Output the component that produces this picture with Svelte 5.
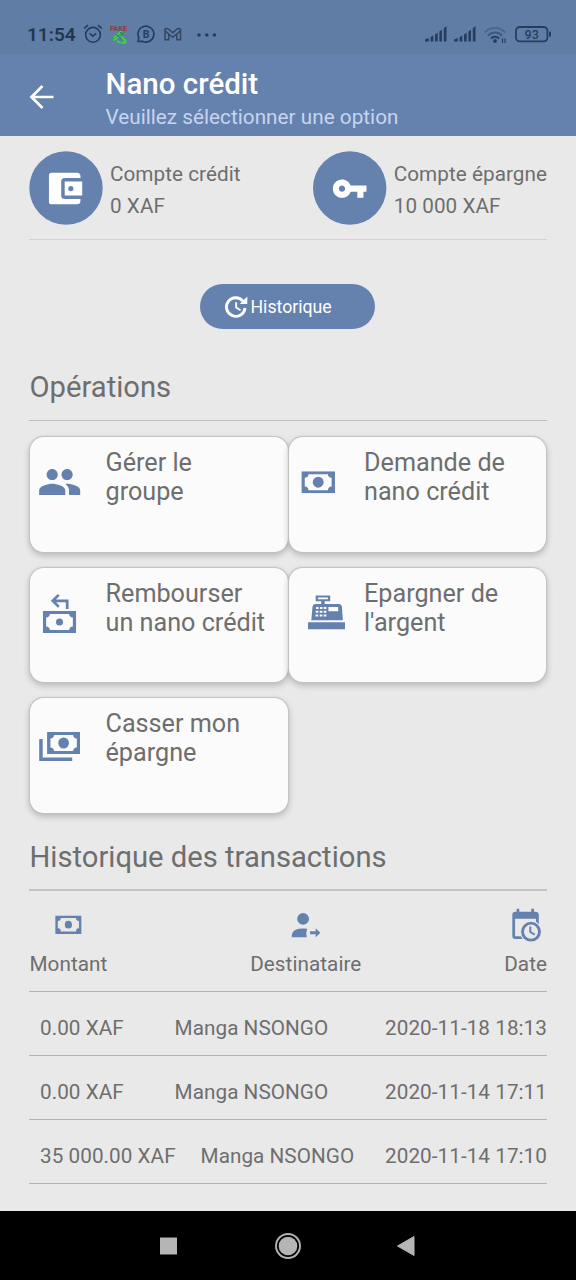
<script>
  const operations = [
    { icon: 'group', lines: ['Gérer le', 'groupe'] },
    { icon: 'cash', lines: ['Demande de', 'nano crédit'] },
    { icon: 'refund', lines: ['Rembourser', 'un nano crédit'] },
    { icon: 'register', lines: ['Epargner de', "l'argent"] },
    { icon: 'notes', lines: ['Casser mon', 'épargne'] }
  ];

  const transactions = [
    { amount: '0.00 XAF', name: 'Manga NSONGO', date: '2020-11-18 18:13' },
    { amount: '0.00 XAF', name: 'Manga NSONGO', date: '2020-11-14 17:11' },
    { amount: '35 000.00 XAF', name: 'Manga NSONGO', date: '2020-11-14 17:10' }
  ];
</script>

{#snippet banknote(x, y, w, h, r)}
  <svg {x} {y} width={w} height={h} viewBox="0 0 34 22" preserveAspectRatio="none">
    <path fill-rule="evenodd" d="M0 0H34V22H0ZM7.2 3A3.6 3.6 0 0 1 3.4 6.6V15.4A3.6 3.6 0 0 1 7.2 19H26.8A3.6 3.6 0 0 1 30.6 15.4V6.6A3.6 3.6 0 0 1 26.8 3Z" />
    <circle cx="17" cy="11" {r} />
  </svg>
{/snippet}

{#snippet signal()}
  <svg width="22" height="16" viewBox="0 0 22 16">
    <path d="M0 15.5V13.6L3.8 12V15.5ZM5.6 15.5V11L8.3 9.6V15.5ZM10 15.5V8.4L12.7 6.8V15.5ZM14.4 15.5V5.4L17 3.7V15.5ZM18.8 15.5V2.2L21.5 0V15.5Z" />
  </svg>
{/snippet}

<div class="screen">
  <div class="status">
    <span class="time">11:54</span>
    <svg class="alarm" width="20" height="20" viewBox="0 0 20 20">
      <g fill="none" stroke="#263d5f" stroke-width="1.6">
        <circle cx="10" cy="10.8" r="7.4" />
        <path d="M1.2 4.3 5 1.2M15 1.2 18.8 4.3M6.6 9.3 9.8 12.2 13.2 9.3" />
      </g>
    </svg>
    <svg class="fake" width="20" height="22" viewBox="0 0 20 22">
      <path d="M17.5 4.500C11 6 3 13 1.500 18.500L9 16C14 11.500 17 8.500 17.500 4.500Z" fill="#2fa35c" />
      <path d="M5 13.500 13 7M4.500 16.500 11 12M12 12.500 16.500 16.500 13 19.500M8 17 12 19M14 18.500H17.500" stroke="#45cc55" stroke-width="1.800" fill="none" />
      <path d="M7 10.500 12 14.500M11 8 14.500 11" stroke="#2c6b6c" fill="none" />
      <text x="1" y="6.5" font-size="7" font-weight="700" fill="#8a3a40" textLength="17" lengthAdjust="spacingAndGlyphs">FAKE</text>
    </svg>
    <svg class="bubble" width="20" height="20" viewBox="0 0 20 20">
      <path d="M2 17.4 2.800 13.8A8 8 0 1 1 6.2 17.200Z" fill="none" stroke="#263d5f" stroke-width="1.6" />
      <text x="6.7" y="13.9" font-size="10.5" font-weight="700" fill="#263d5f">B</text>
    </svg>
    <svg class="mail" width="18" height="15" viewBox="0 0 18 15">
      <path d="M1 12.7V2.2Q3 .8 4.5 2L8.7 5.7 13 2Q15 .8 16.5 2.2V12.7H12.8V7L8.7 10.3 4.7 7V12.7ZM4.7 7 1 3.7M12.8 7 16.5 3.7" fill="none" stroke="#33465f" stroke-width="1.5" />
    </svg>
    <svg class="more" width="20" height="4" viewBox="0 0 20 4"><circle cx="2" cy="2" r="1.8" /><circle cx="9.800" cy="2" r="1.8" /><circle cx="17.4" cy="2" r="1.8" /></svg>
    <div class="spacer"></div>
    <div class="radio">{@render signal()}</div>
    <div class="radio second">{@render signal()}</div>
    <svg class="wifi" width="24" height="18" viewBox="0 0 24 18">
      <g fill="none" stroke-width="2">
        <path d="M.8 6.5A14 14 0 0 1 21.2 6.5" stroke="#4b6789" />
        <path d="M4 9.7A9.5 9.5 0 0 1 18 9.7" stroke="#40597b" />
        <path d="M7 12.6A5.3 5.3 0 0 1 15 12.6" stroke="#263d5f" />
      </g>
      <circle cx="11" cy="15" r="1.9" />
      <path d="M18.5 12.5V17M21 12.5V17" stroke="#263d5f" stroke-width="1.2" />
    </svg>
    <svg class="battery" width="37" height="17" viewBox="0 0 37 17">
      <rect x="1" y="1" width="31.4" height="14.4" rx="3.8" fill="none" stroke="#263d5f" stroke-width="1.8" />
      <rect x="34" y="5.6" width="2" height="5.2" rx=".8" />
      <text x="16.7" y="12.600" text-anchor="middle" font-size="12.5" font-weight="500" fill="#263d5f">93</text>
    </svg>
  </div>

  <header>
    <svg width="26" height="26" viewBox="0 0 26 26">
      <path d="M24.500 13H3M13.500 2 2.500 13 13.500 24" fill="none" stroke="#fff" stroke-width="2.700" />
    </svg>
    <div class="titles">
      <h1>Nano crédit</h1>
      <p>Veuillez sélectionner une option</p>
    </div>
  </header>

  <main>
    <section class="accounts">
      <div class="account">
        <svg width="74" height="74" viewBox="0 0 74 74">
          <circle cx="37" cy="37" r="36.700" />
          <g transform="translate(14.700 16.500) scale(1.75)" fill="#fff">
            <path fill-rule="evenodd" d="M21 18v1a2 2 0 0 1-2 2H4.500A1.500 1.500 0 0 1 3 19.500v-15A1.500 1.500 0 0 1 4.500 3H19a2 2 0 0 1 2 2v1h-9a2 2 0 0 0-2 2v8a2 2 0 0 0 2 2ZM12 16h10V8H12ZM15.500 10.500a1.500 1.500 0 1 0 0 3 1.500 1.500 0 0 0 0-3Z" />
          </g>
        </svg>
        <div><p>Compte crédit</p><p>0 XAF</p></div>
      </div>
      <div class="account">
        <svg width="74" height="74" viewBox="0 0 74 74">
          <circle cx="36.700" cy="37" r="36.700" />
          <g transform="translate(18.300 19.300) scale(1.530)" fill="#fff">
            <path d="M12.650 10C11.830 7.670 9.610 6 7 6c-3.310 0-6 2.690-6 6s2.690 6 6 6c2.610 0 4.830-1.670 5.650-4H17v4h4v-4h2v-4H12.650zM7 14c-1.100 0-2-.9-2-2s.9-2 2-2 2 .9 2 2-.9 2-2 2z" />
          </g>
        </svg>
        <div><p>Compte épargne</p><p>10 000 XAF</p></div>
      </div>
    </section>

    <button>
      <svg width="24" height="24" viewBox="0 0 24 24">
        <path d="M19 6.200A9.300 9.300 0 1 0 21 13" fill="none" stroke="#fff" stroke-width="2.900" />
        <path d="M23.300 1.500V9H15.800ZM11.200 7.200H13.100V12.100L17 14.600 16.100 16 11.200 13Z" fill="#fff" />
      </svg>
      <span>Historique</span>
    </button>

    <h2 class="ops">Opérations</h2>

    <section class="grid">
      {#each operations as op}
        <article>
          <svg width="75.5" height="100" viewBox="0 0 75.5 100">
            {#if op.icon === 'group'}
              <path transform="translate(7.300 22.600) scale(1.864)" d="M16 11c1.660 0 2.990-1.340 2.990-3S17.660 5 16 5c-1.660 0-3 1.340-3 3s1.340 3 3 3zm-8 0c1.660 0 2.990-1.340 2.990-3S9.660 5 8 5C6.340 5 5 6.340 5 8s1.340 3 3 3zm0 2c-2.330 0-7 1.170-7 3.500V19h14v-2.500c0-2.330-4.670-3.500-7-3.500zm8 0c-.29 0-.62.02-.97.05 1.160.84 1.970 1.970 1.970 3.450V19h6v-2.500c0-2.330-4.670-3.500-7-3.500z" />
            {:else if op.icon === 'cash'}
              {@render banknote(12.4, 34.2, 33.6, 22, 5.5)}
            {:else if op.icon === 'refund'}
              {@render banknote(12.8, 43, 33.4, 22, 3.6)}
              <path d="M28.800 26.900 22.700 32.800 28.800 38.900M23 32.800H37.200V41" fill="none" stroke="#6581ae" stroke-width="2.700" />
            {:else if op.icon === 'register'}
              <g transform="translate(-0.3 -0.7)">
                <path fill-rule="evenodd" d="M19.300 55H56.300V62H19.300ZM22.600 53 23.800 39.500Q24 37 26.500 36.700H32.500V34H27V28.300H41.500V34H36V36.700H50.500Q53 37 53.200 39.500L54.200 53ZM29.300 30.300V32H39.200V30.300ZM39.700 39.800V43.900H49.500V39.800Z" />
                <path d="M27.300 39.700h2.700v2h-2.700zM31.300 39.700h2.500v2h-2.500zM35 39.700h2.700v2H35zM27 43.500h2.700v2H27zM31 43.500h2.700v2H31zM35 43.500h2.700v2H35zM26.800 47.300h2.700v2h-2.700zM31 47.300h2.700v2H31zM35 47.300h2.700v2H35z" fill="#fbfbfb" />
              </g>
            {:else}
              {@render banknote(17.1, 34, 33, 22, 5.5)}
              <path d="M9.200 40.900H12.700V59.500H42.200V63H9.200Z" />
            {/if}
          </svg>
          <p>{op.lines[0]}<br />{op.lines[1]}</p>
        </article>
      {/each}
    </section>

    <h2 class="hist">Historique des transactions</h2>

    <section class="table">
      <div class="head">
        <div>
          <svg width="30" height="38" viewBox="0 0 30 38">{@render banknote(2.2, 10.500, 26.400, 18.400, 4.600)}</svg>
          <span>Montant</span>
        </div>
        <div>
          <svg width="30" height="38" viewBox="0 0 30 38">
            <circle cx="12.100" cy="13.900" r="5.900" />
            <path d="M.7 32.300V29.900Q1.900 23.900 10.400 23.500Q13.900 23.300 16.200 23.800Q14.700 27.400 15.700 32.300Z" />
            <path d="M19 26.300H24.700V23.300L29.400 27.800 24.700 32.300V29.300H19Z" />
          </svg>
          <span>Destinataire</span>
        </div>
        <div>
          <svg width="31" height="38" viewBox="0 0 31 38">
            <path fill-rule="evenodd" d="M6.600 3.800H9.300V6.700H21.200V3.800H24V6.700H25.300Q28.800 6.700 28.800 10V34.100H5.300Q2.300 34.100 2.300 31.100V9.700Q2.300 6.700 5.300 6.700H6.600ZM5.100 13.800V31.300H26V13.800Z" />
            <circle cx="21" cy="26.700" r="11" fill="#e9e9e9" />
            <circle cx="21" cy="26.700" r="8.500" fill="#e9e9e9" stroke="#6581ae" stroke-width="2.800" />
            <path d="M20.300 21.600V27L24.700 29.600" fill="none" stroke="#6581ae" stroke-width="2" />
          </svg>
          <span>Date</span>
        </div>
      </div>
      {#each transactions as t}
        <div class="row">
          <span>{t.amount}</span>
          <span class="name">{t.name}</span>
          <span>{t.date}</span>
        </div>
      {/each}
    </section>
  </main>

  <nav>
    <svg width="18" height="18" viewBox="0 0 18 18"><rect x="0" y=".5" width="17" height="17" /></svg>
    <svg class="home" width="28" height="28" viewBox="0 0 28 28"><circle cx="14" cy="14" r="9.300" /><circle cx="14" cy="14" r="12" fill="none" stroke="#b5b5b5" stroke-width="1.900" /></svg>
    <svg width="18" height="20" viewBox="0 0 18 20"><path d="M.5 10 17 .5V19.500Z" stroke="#b5b5b5" stroke-linejoin="round" /></svg>
  </nav>
</div>

<style>
  :global(body) { margin: 0; }
  .screen {
    width: 576px;
    height: 1280px;
    overflow: hidden;
    display: flex;
    flex-direction: column;
    background: #e9e9e9;
    color: #6e6e6e;
    font-family: Roboto, sans-serif;
    font-size: 20.7px;
    letter-spacing: 0.05px;
    line-height: 24px;
  }
  svg { display: block; flex: none; fill: #6581ae; }
  h1, h2, p { margin: 0; font-weight: 400; }

  .status {
    height: 54px;
    box-sizing: border-box;
    padding: 15px 24px 0 27px;
    display: flex;
    align-items: center;
    background: #607da5;
    letter-spacing: 0;
  }
  .status svg { fill: #263d5f; }
  .time { width: 56px; font-size: 19px; font-weight: 600; letter-spacing: 0; color: #233650; }
  .alarm { margin-top: -1px; }
  .fake { margin-left: 6px; }
  .bubble { margin-left: 7px; margin-top: -1px; }
  .mail { margin-left: 8px; margin-top: -1px; }
  .more { margin-left: 15px; }
  .spacer { flex: 1; }
  .radio { margin-right: 1px; margin-top: -1px; }
  .second { margin-left: 6px; }
  .wifi { margin-left: 7px; }
  .battery { margin-left: 7px; margin-top: -1px; }

  header {
    height: 82px;
    box-sizing: border-box;
    padding: 11px 29px 0;
    display: flex;
    background: #6581ae;
  }
  header svg { margin-top: 19px; }
  .titles { margin-left: 50.5px; padding-top: 1px; }
  h1 { font-size: 29.5px; line-height: 36px; font-weight: 500; color: #fff; letter-spacing: 0; }
  .titles p { line-height: 30px; color: #c6d5ef; letter-spacing: 0.03px; }

  main { flex: 1; padding: 0 29px; display: flex; flex-direction: column; }
  .accounts {
    height: 104px;
    box-sizing: border-box;
    padding-top: 15px;
    display: flex;
    justify-content: space-between;
    border-bottom: 1px solid #d3d3d3;
  }
  .account { display: flex; gap: 7px; }
  .account p { line-height: 32px; }
  .account div { padding-top: 7px; }

  button {
    align-self: center;
    width: 175px;
    height: 45px;
    margin: 44px 2px 0 0;
    padding: 0 0 0 24px;
    border: 0;
    border-radius: 23px;
    display: flex;
    align-items: center;
    gap: 3px;
    background: #6581ae;
    color: #fff;
    font: 17.7px Roboto, sans-serif;
  }

  h2 { padding-left: 0.5px; font-size: 29.2px; line-height: 36px; letter-spacing: 0; }
  .ops { margin-top: 40px; height: 51px; border-bottom: 1px solid #bebebe; }

  .grid {
    margin: 16px 0 0 1px;
    display: grid;
    grid-template-columns: 257.75px 257.75px;
    column-gap: 0.75px;
    row-gap: 16px;
  }
  article {
    height: 114.5px;
    box-sizing: border-box;
    display: flex;
    padding-top: 11px;
    border-radius: 14px;
    background: #fbfbfb;
    box-shadow: 0 0 1px 0.6px #c2c2c2, 0 3px 6px 1px rgba(0, 0, 0, 0.2);
    font-size: 25.2px;
    line-height: 29.3px;
    letter-spacing: 0;
  }
  article svg { margin-top: -11px; }

  .hist { margin-top: 26.5px; height: 50px; border-bottom: 2px solid #c3c3c3; }

  .head {
    height: 101px;
    box-sizing: border-box;
    display: flex;
    justify-content: space-between;
    padding-top: 14px;
    border-bottom: 1px solid #9fb6cb;
  }
  .head div { display: flex; flex-direction: column; align-items: center; gap: 9px; }
  .head span { padding-left: 0.5px; }
  .row {
    height: 64px;
    box-sizing: border-box;
    display: flex;
    align-items: center;
    justify-content: space-between;
    padding: 8px 0 0 11px;
    border-bottom: 1px solid #9fb6cb;
  }
  .name { margin-right: 6px; }

  nav {
    height: 69px;
    box-sizing: border-box;
    padding: 0 161px 0 160px;
    display: flex;
    align-items: center;
    justify-content: space-between;
    background: #000;
  }
  nav svg { fill: #b5b5b5; }
  .home { margin-left: 1px; }
</style>
